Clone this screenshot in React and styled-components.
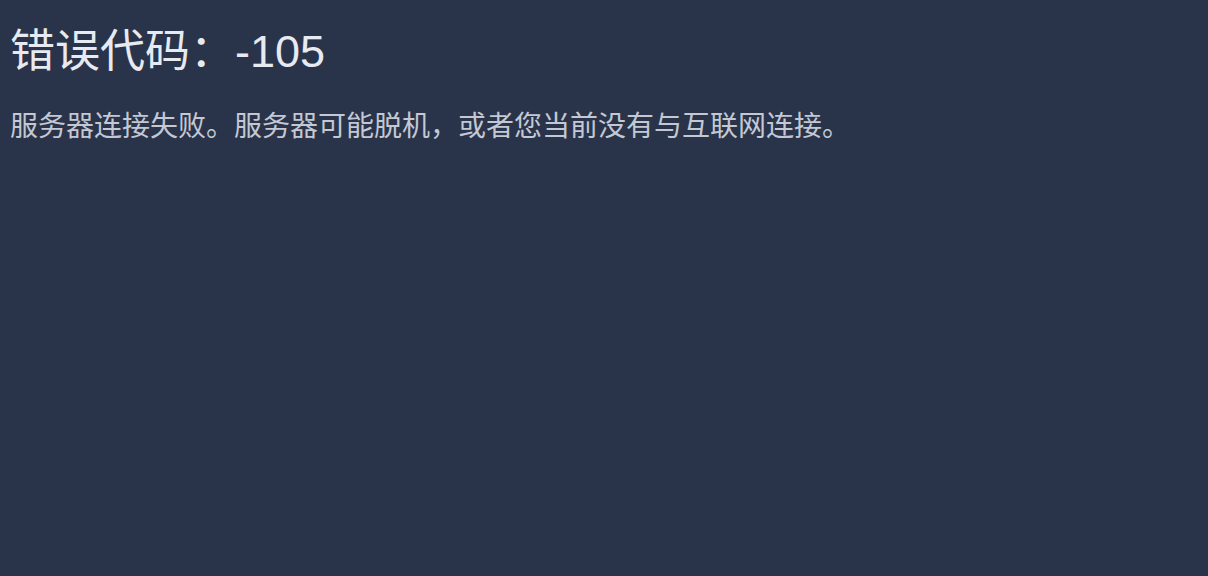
import styled, { createGlobalStyle } from 'styled-components';

const GlobalStyle = createGlobalStyle`
  html, body {
    margin: 0;
    padding: 0;
    background: #29344b;
  }
  body {
    font-family: 'Liberation Sans', 'Noto Sans CJK SC', sans-serif;
  }
`;

const Page = styled.div`
  min-height: 576px;
  background: #29344b;
  padding: 22px 10px 0;
  box-sizing: border-box;
`;

const Title = styled.h1`
  margin: 0;
  font-size: 45px;
  font-weight: 400;
  line-height: 60px;
  color: #e7eaf0;
`;

const Message = styled.p`
  margin: 27px 0 0;
  font-size: 28px;
  line-height: 36px;
  color: #c3c8d2;
`;

const App = () => (
  <Page>
    <GlobalStyle />
    <Title>错误代码：-105</Title>
    <Message>服务器连接失败。服务器可能脱机，或者您当前没有与互联网连接。</Message>
  </Page>
);

export default App;
